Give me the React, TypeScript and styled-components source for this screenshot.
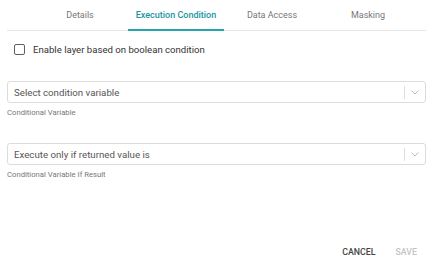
import React, { useState } from "react";
import styled, { createGlobalStyle } from "styled-components";

const GlobalStyle = createGlobalStyle`
  html, body {
    margin: 0;
    padding: 0;
    background: #ffffff;
    font-family: Roboto, "Noto Sans", Arial, sans-serif;
  }
`;

const Page = styled.div`
  width: 435px;
  height: 261px;
  display: flex;
  flex-direction: column;
  box-sizing: border-box;
  padding: 0 9px 0 7px;
`;

const TabBar = styled.div`
  display: flex;
  height: 30px;
  border-bottom: 1px solid #e6e6e6;
  padding-left: 25px;
`;

const Tab = styled.div<{ $active?: boolean }>`
  width: 96px;
  display: flex;
  align-items: center;
  justify-content: center;
  box-sizing: border-box;
  font-size: 9px;
  font-weight: ${(p) => (p.$active ? 500 : 400)};
  color: ${(p) => (p.$active ? "#1a93a3" : "#777777")};
  border-bottom: 2px solid ${(p) => (p.$active ? "#27a3b0" : "transparent")};
  margin-bottom: -1px;
  cursor: pointer;
`;

const CheckRow = styled.label`
  display: flex;
  align-items: center;
  gap: 8px;
  margin: 13px 0 0 7px;
  font-size: 9.6px;
  color: #333333;
`;

const Box = styled.span`
  width: 9px;
  height: 9px;
  border: 1.5px solid #5f5f5f;
  border-radius: 2px;
`;

const Field = styled.div<{ $top: number }>`
  margin-top: ${(p) => p.$top}px;
  display: flex;
  flex-direction: column;
`;

const SelectBox = styled.div`
  height: 22px;
  box-sizing: border-box;
  border: 1px solid #dcdcdc;
  border-radius: 3px;
  display: flex;
  align-items: center;
`;

const Placeholder = styled.span`
  flex: 1;
  padding-left: 6px;
  font-size: 9.7px;
  color: #555555;
`;

const Divider = styled.span`
  width: 1px;
  height: 13px;
  background: #dddddd;
`;

const Chevron = styled.span`
  width: 20px;
  display: flex;
  justify-content: center;
  align-items: center;
`;

const Helper = styled.span`
  margin-top: 5px;
  font-size: 7.7px;
  color: #777777;
`;

const Footer = styled.div`
  margin-top: auto;
  height: 18px;
  display: flex;
  justify-content: flex-end;
  align-items: center;
  gap: 20px;
  padding-right: 9px;
`;

const FooterButton = styled.button<{ $disabled?: boolean }>`
  background: none;
  border: none;
  padding: 0;
  font-family: Roboto, sans-serif;
  font-size: 8.8px;
  font-weight: 500;
  color: ${(p) => (p.$disabled ? "#c4c4c4" : "#444444")};
`;

const ChevronIcon = () => (
  <svg width="8" height="5" viewBox="0 0 8 5">
    <path d="M0.5 0.5 L4 4 L7.5 0.5" fill="none" stroke="#bbbbbb" strokeWidth="1" />
  </svg>
);

const Select: React.FC<{ placeholder: string; helper: string; top: number }> = ({ placeholder, helper, top }) => (
  <Field $top={top}>
    <SelectBox>
      <Placeholder>{placeholder}</Placeholder>
      <Divider />
      <Chevron>
        <ChevronIcon />
      </Chevron>
    </SelectBox>
    <Helper>{helper}</Helper>
  </Field>
);

const tabs = ["Details", "Execution Condition", "Data Access", "Masking"];

const App: React.FC = () => {
  const [active, setActive] = useState(1);

  return (
    <>
      <GlobalStyle />
      <Page>
        <TabBar>
          {tabs.map((t, i) => (
            <Tab key={t} $active={i === active} onClick={() => setActive(i)}>
              {t}
            </Tab>
          ))}
        </TabBar>
        <CheckRow>
          <Box />
          Enable layer based on boolean condition
        </CheckRow>
        <Select top={26} placeholder="Select condition variable" helper="Conditional Variable" />
        <Select top={26} placeholder="Execute only if returned value is" helper="Conditional Variable If Result" />
        <Footer>
          <FooterButton>CANCEL</FooterButton>
          <FooterButton $disabled>SAVE</FooterButton>
        </Footer>
      </Page>
    </>
  );
};

export default App;
